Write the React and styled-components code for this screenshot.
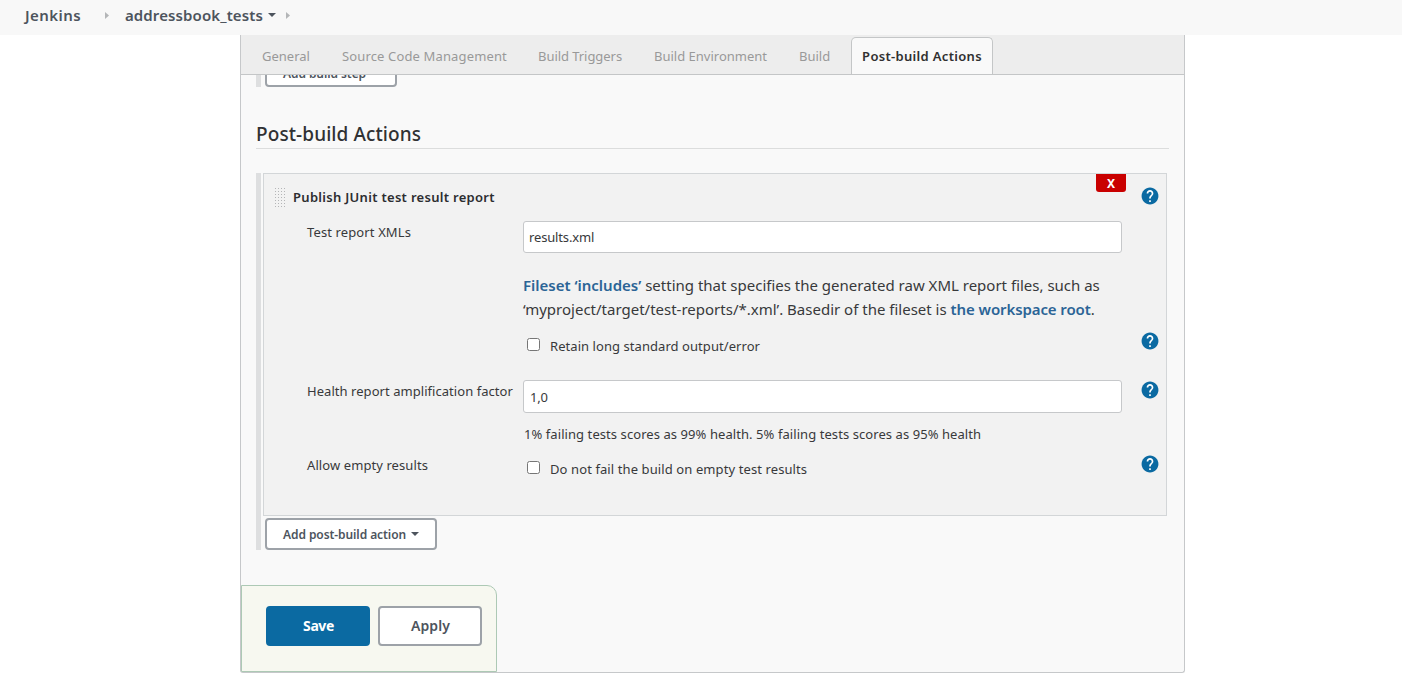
import React from "react";
import styled, { createGlobalStyle } from "styled-components";

const GlobalStyle = createGlobalStyle`
  *, *::before, *::after { box-sizing: border-box; }
  body {
    margin: 0;
    background: #fff;
    color: #38393b;
    font: 400 13px/22px "Noto Sans", "Open Sans", sans-serif;
    overflow: hidden;
  }
  button, input { font: inherit; color: inherit; margin: 0; }
`;

const Breadcrumbs = styled.nav`
  display: flex;
  align-items: center;
  height: 35px;
  padding: 0 0 5px 25px;
  background: #f8f8f8;
`;

const Crumb = styled.a`
  font-size: 15px;
  line-height: 22px;
  margin-top: -1px;
  font-weight: 600;
  color: #4d545d;
  letter-spacing: ${(p) => p.$spacing || 0}px;
`;

const Separator = styled.svg`
  width: 4px;
  height: 7px;
  margin-left: ${(p) => p.$before}px;
  margin-right: ${(p) => p.$after || 0}px;
  fill: #b4b6b8;
`;

const Caret = styled.svg`
  width: ${(p) => p.$width}px;
  height: ${(p) => p.$width / 2}px;
  margin-left: ${(p) => p.$gap}px;
  fill: #4d545d;
`;

const Panel = styled.main`
  width: 945px;
  height: 638px;
  margin-left: 240px;
  display: flex;
  flex-direction: column;
  border: 1px solid #c6c8ca;
  border-top: 0;
  border-radius: 0 0 3px 3px;
  background: #f9f9f9;
`;

const TabBar = styled.div`
  flex: none;
  display: flex;
  align-items: flex-end;
  height: 40px;
  padding-left: 10px;
  background: #ededed;
  border-bottom: 1px solid #c4c6c7;
`;

const Tab = styled.button`
  height: 37px;
  margin-right: 10px;
  padding: 0 10px;
  border: 1px solid ${(p) => (p.$active ? "#c4c6c7" : "transparent")};
  border-bottom: 0;
  border-radius: 5px 5px 0 0;
  background: ${(p) => (p.$active ? "#f9f9f9" : "transparent")};
  color: ${(p) => (p.$active ? "#303030" : "#999")};
  font-weight: ${(p) => (p.$active ? 600 : 400)};
  letter-spacing: ${(p) => p.$spacing || 0}px;
  width: ${(p) => p.$width}px;
  white-space: nowrap;
`;

const Scroller = styled.div`
  flex: 1;
  min-height: 0;
  overflow: hidden;
  display: flex;
  flex-direction: column;
  padding: 0 15px;
`;

const StepGroup = styled.div`
  flex: none;
  border-left: 5px solid #dedfe0;
  margin-top: ${(p) => p.$top}px;
  padding: 0 2px;
`;

const MenuButton = styled.button`
  display: flex;
  align-items: center;
  width: ${(p) => p.$width}px;
  height: 32px;
  margin: 2px 0 0 2px;
  padding: ${(p) => p.$drop || 2}px 0 0 16px;
  border: 2px solid #9da2a8;
  border-radius: 4px;
  background: #fff;
  color: #4d545d;
  font-size: 12px;
  font-weight: 600;
  letter-spacing: -0.08px;
  white-space: nowrap;

  svg { margin-top: -2px; }
`;

const SectionTitle = styled.h2`
  flex: none;
  width: 913px;
  height: 32px;
  margin: 30px 0 0;
  border-bottom: 1px solid #dcdddd;
  font-size: 19px;
  font-weight: 500;
  line-height: 34px;
  letter-spacing: 0.09px;
  color: #303133;
`;

const Card = styled.section`
  position: relative;
  width: 904px;
  height: 343px;
  padding-right: 7px;
  background: #f2f2f2;
  border: 1px solid #d3d6d8;
`;

const DeleteButton = styled.button`
  position: absolute;
  top: 0;
  right: 40px;
  width: 30px;
  height: 18px;
  padding: 1px 0 0;
  border: 0;
  border-radius: 0 0 3px 3px;
  background: #c90000;
  color: #fff;
  font: 700 12px/17px "Noto Sans", sans-serif;
`;

const CardHeader = styled.header`
  display: flex;
  height: 47px;
  padding: 13px 0 0 10px;
`;

const DragHandle = styled.span`
  width: 12px;
  height: 21px;
  margin-right: 7px;
  background: radial-gradient(circle at 1.5px 1.5px, #b4b5b7 0.6px, transparent 1px) 0 0 / 3px 3px;
`;

const CardTitle = styled.h3`
  flex: 1;
  margin: -1px 0 0;
  font-size: 13px;
  line-height: 22px;
  font-weight: 600;
  letter-spacing: 0.3px;
  color: #2c2d30;
`;

const Row = styled.div`
  display: grid;
  grid-template-columns: 216px 599px 1fr 18px;
  align-items: start;
  height: ${(p) => p.$height}px;
  padding-left: 43px;
`;

const Label = styled.label`
  grid-column: 1;
  letter-spacing: ${(p) => p.$spacing || 0}px;
  white-space: nowrap;
`;

const Control = styled.div`
  grid-column: 2;
`;

const TextInput = styled.input`
  display: block;
  width: 599px;
  height: ${(p) => p.$height}px;
  padding: 0 ${(p) => p.$indent}px;
  border: 1px solid #c6c8ca;
  border-radius: 3px;
  background: #fff;
  letter-spacing: -0.15px;
`;

const Description = styled.p`
  margin: 9px 0 0;
  font-size: 15px;
  line-height: 24px;
  white-space: nowrap;
`;

const Link = styled.a`
  font-weight: 600;
  color: #2b6496;
  letter-spacing: ${(p) => p.$spacing || 0}px;
`;

const Hint = styled.p`
  margin: 10px 0 0 1px;
  letter-spacing: 0.07px;
`;

const CheckLabel = styled.label`
  display: flex;
  align-items: flex-start;
  gap: 10px;
  padding: 4px 0 0 4px;
  letter-spacing: ${(p) => p.$spacing}px;
`;

const Checkbox = styled.input`
  width: 13px;
  height: 13px;
  margin-top: 3px;
`;

const HelpSvg = styled.svg`
  grid-column: 4;
  width: 18px;
  height: 18px;
  margin-top: ${(p) => p.$top}px;
`;

const SaveBar = styled.footer`
  display: flex;
  gap: 8px;
  width: 256px;
  height: 87px;
  flex: none;
  margin: 35px 0 0 -15px;
  padding: 20px 0 0 24px;
  background: #f7f8f0;
  border: 1px solid #adc9b5;
  border-radius: 0 10px 0 0;
`;

const ActionButton = styled.button`
  width: 104px;
  height: 40px;
  padding: 0 0 0 1px;
  border: 2px solid ${(p) => (p.$primary ? "#0b6aa2" : "#9da2a8")};
  border-radius: 4px;
  background: ${(p) => (p.$primary ? "#0b6aa2" : "#fff")};
  color: ${(p) => (p.$primary ? "#fff" : "#4d545d")};
  font-size: 14px;
  font-weight: ${(p) => (p.$primary ? 700 : 600)};
  letter-spacing: ${(p) => (p.$primary ? -0.4 : 0.1)}px;
`;

const Arrow = ({ before, after }) => (
  <Separator $before={before} $after={after} viewBox="0 0 4 7">
    <path d="M0 0 L4 3.5 L0 7 Z" />
  </Separator>
);

const DownCaret = ({ width, gap }) => (
  <Caret $width={width} $gap={gap} viewBox="0 0 8 4">
    <path d="M0 0 H8 L4 4 Z" />
  </Caret>
);

const Help = ({ top = 0 }) => (
  <HelpSvg $top={top} viewBox="1.3 1.3 21.4 21.4">
    <path
      fill="#0b6aa2"
      d="M12 2C6.48 2 2 6.48 2 12s4.48 10 10 10 10-4.48 10-10S17.52 2 12 2z"
    />
    <path
      fill="#fff"
      d="M13 19h-2v-2h2v2zm2.07-7.75l-.9.92C13.45 12.9 13 13.5 13 15h-2v-.5c0-1.1.45-2.1 1.17-2.83l1.24-1.26c.37-.36.59-.86.59-1.41 0-1.1-.9-2-2-2s-2 .9-2 2H8c0-2.21 1.79-4 4-4s4 1.79 4 4c0 .88-.36 1.68-.93 2.25z"
    />
  </HelpSvg>
);

const tabs = [
  { name: "General", width: 70 },
  { name: "Source Code Management", width: 186, spacing: 0.14 },
  { name: "Build Triggers", width: 106, spacing: -0.05 },
  { name: "Build Environment", width: 135 },
  { name: "Build", width: 53 },
  { name: "Post-build Actions", width: 142, spacing: 0.32, active: true },
];

export default function App() {
  return (
    <>
      <GlobalStyle />
      <Breadcrumbs>
        <Crumb $spacing={0.42}>Jenkins</Crumb>
        <Arrow before={24} after={16} />
        <Crumb $spacing={0.11}>addressbook_tests</Crumb>
        <DownCaret width={8} gap={5} />
        <Arrow before={10} />
      </Breadcrumbs>
      <Panel>
        <TabBar>
          {tabs.map((t) => (
            <Tab key={t.name} $width={t.width} $spacing={t.spacing} $active={t.active}>
              {t.name}
            </Tab>
          ))}
        </TabBar>
        <Scroller>
          <StepGroup $top={-22}>
            <MenuButton $width={132} $drop={5}>
              Add build step
              <DownCaret width={8} gap={5} />
            </MenuButton>
          </StepGroup>
          <SectionTitle>Post-build Actions</SectionTitle>
          <StepGroup $top={24}>
            <Card>
              <DeleteButton>X</DeleteButton>
              <CardHeader>
                <DragHandle />
                <CardTitle>Publish JUnit test result report</CardTitle>
                <Help />
              </CardHeader>
              <Row $height={43}>
                <Label $spacing={0.12}>Test report XMLs</Label>
                <Control>
                  <TextInput $height={32} $indent={5} defaultValue="results.xml" />
                </Control>
              </Row>
              <Row $height={67}>
                <Control>
                  <Description>
                    <Link>Fileset ‘includes’</Link> setting that specifies the generated raw XML
                    report files, such as
                    <br />
                    ‘myproject/target/test-reports/*.xml’. Basedir of the fileset is{" "}
                    <Link $spacing={-0.1}>the workspace root</Link>.
                  </Description>
                </Control>
              </Row>
              <Row $height={49}>
                <Control>
                  <CheckLabel $spacing={0.06}>
                    <Checkbox type="checkbox" />
                    Retain long standard output/error
                  </CheckLabel>
                </Control>
                <Help top={1} />
              </Row>
              <Row $height={74}>
                <Label $spacing={0.05}>Health report amplification factor</Label>
                <Control>
                  <TextInput $height={33} $indent={6} defaultValue="1,0" />
                  <Hint>
                    1% failing tests scores as 99% health. 5% failing tests scores as 95% health
                  </Hint>
                </Control>
                <Help top={1} />
              </Row>
              <Row $height={60}>
                <Label $spacing={0.085}>Allow empty results</Label>
                <Control>
                  <CheckLabel $spacing={0.1}>
                    <Checkbox type="checkbox" />
                    Do not fail the build on empty test results
                  </CheckLabel>
                </Control>
                <Help top={1} />
              </Row>
            </Card>
            <MenuButton $width={172}>
              Add post-build action
              <DownCaret width={8} gap={5} />
            </MenuButton>
          </StepGroup>
          <SaveBar>
            <ActionButton $primary>Save</ActionButton>
            <ActionButton>Apply</ActionButton>
          </SaveBar>
        </Scroller>
      </Panel>
    </>
  );
}
